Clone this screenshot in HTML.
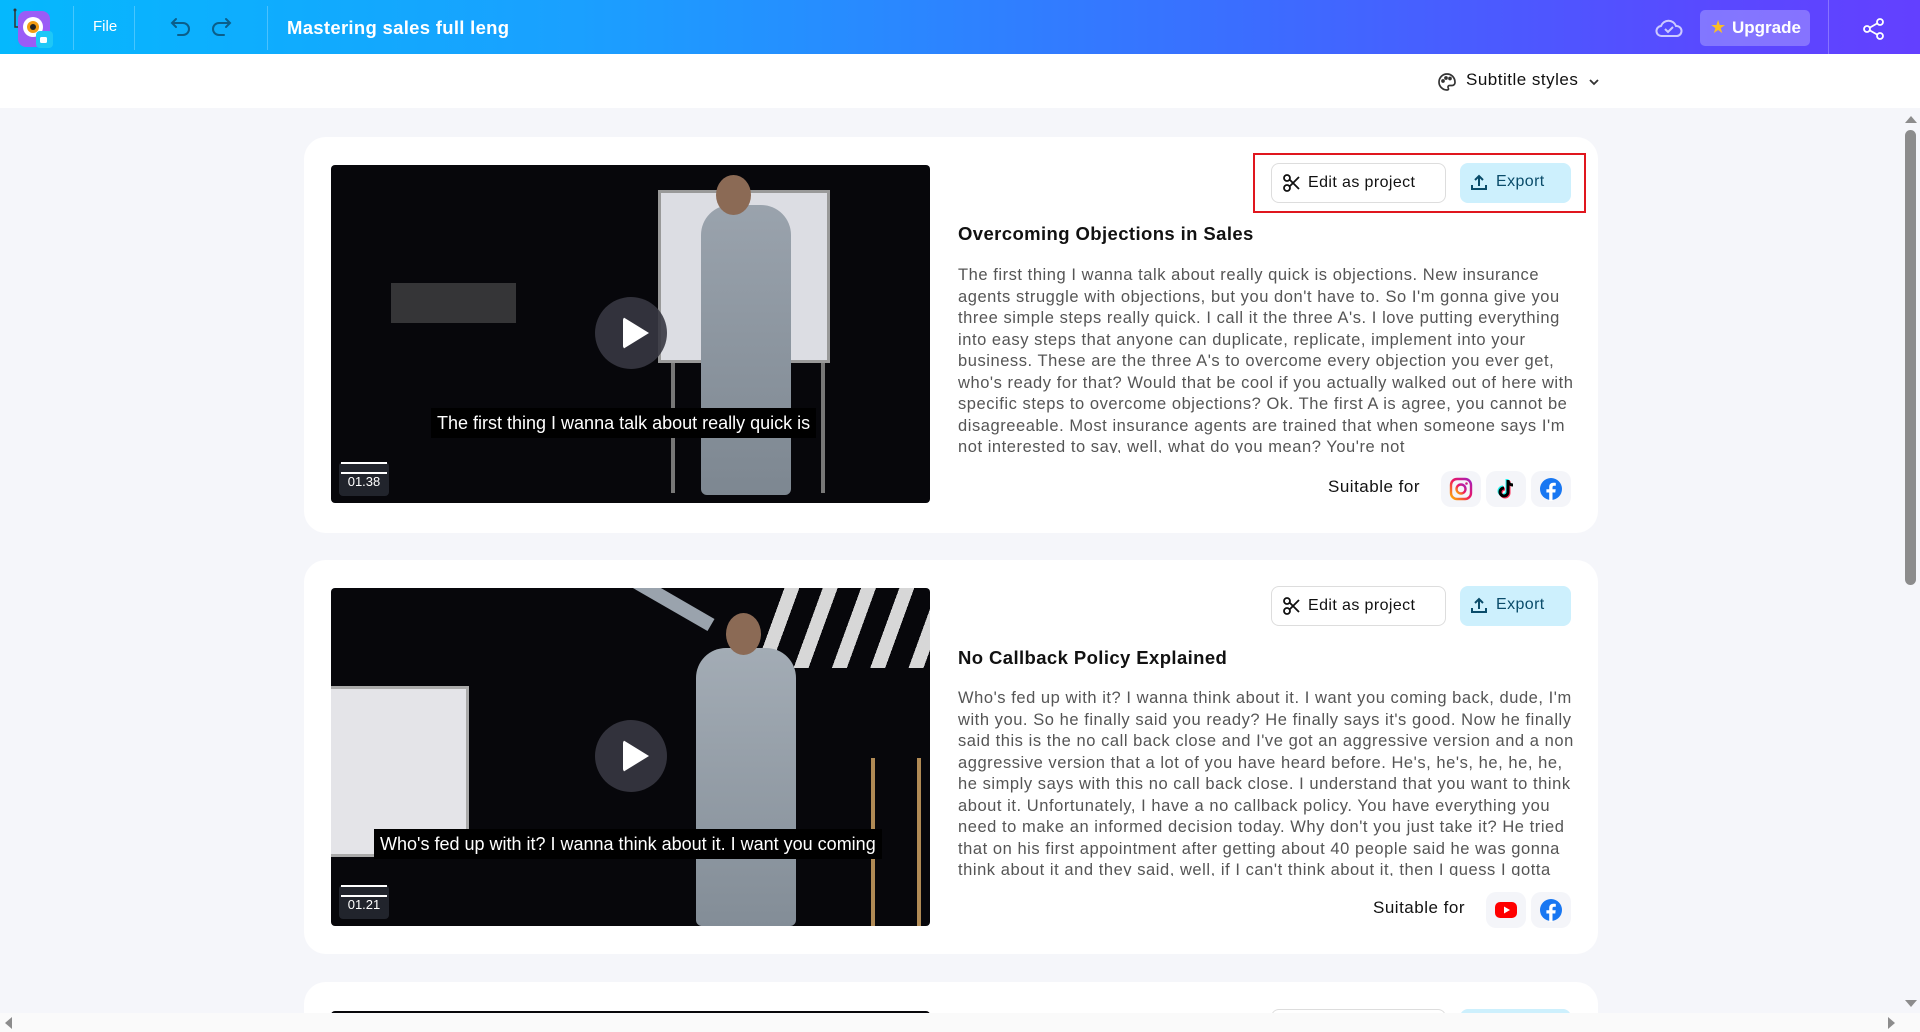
<!DOCTYPE html>
<html><head><meta charset="utf-8"><style>
*{box-sizing:border-box;margin:0;padding:0}
html{width:1920px;height:1032px;overflow:hidden}
body{width:1920px;height:1032px;overflow:hidden;background:#f5f6fa;font-family:"Liberation Sans",sans-serif;position:relative}
.hdr{position:absolute;left:0;top:0;width:1920px;height:54px;background:linear-gradient(90deg,#05b8fd 0%,#1aa0ff 30%,#3b6dff 65%,#5a48ff 90%,#6340ff 100%);color:#fff}
.div{position:absolute;top:6px;width:1px;height:44px;background:rgba(255,255,255,.25)}
.sub{position:absolute;left:0;top:54px;width:1920px;height:54px;background:#fff}
.card{position:absolute;left:304px;width:1294px;background:#fff;border-radius:22px;overflow:hidden}
.vid{position:absolute;left:27px;width:599px;height:338px;border-radius:4px;overflow:hidden;background:#07070b}
.play{position:absolute;left:264px;top:132px;width:72px;height:72px;border-radius:50%;background:rgba(55,55,65,.9)}
.play:after{content:"";position:absolute;left:28px;top:20px;border-left:26px solid #fff;border-top:16px solid transparent;border-bottom:16px solid transparent;border-radius:3px}
.cap{position:absolute;height:30px;background:#000;color:#fff;font-size:18px;line-height:30px;padding:0 6px;white-space:nowrap}
.badge{position:absolute;left:8px;top:297px;width:50px;height:34px;border-radius:4px;background:rgba(40,44,52,.8);color:#fff;font-size:13px;text-align:center;line-height:40px}
.badge:before{content:"";position:absolute;left:2px;top:0;width:46px;height:8px;border-top:2px solid #fff;border-bottom:2px solid #fff}
.btn{position:absolute;height:40px;border-radius:8px;font-size:16px;line-height:38px;color:#111;letter-spacing:.4px}
.edit{left:967px;width:175px;border:1px solid #ddd;background:#fff;padding-left:36px}
.exp{left:1156px;width:111px;background:#cdf0fd;color:#0a4c6a;padding-left:36px}
.ttl{position:absolute;left:654px;font-size:18.5px;font-weight:bold;color:#111;letter-spacing:.4px}
.body{position:absolute;left:654px;width:616px;font-size:16.5px;letter-spacing:.55px;line-height:21.5px;color:#555;overflow:hidden;height:188px}
.suit{position:absolute;font-size:17px;color:#111;letter-spacing:.5px}
.ic{position:absolute;width:40px;height:36px;border-radius:10px;background:#f4f5f9}
.ic svg{position:absolute;left:8px;top:6px}
</style></head><body>
<div class="hdr">
 <svg style="position:absolute;left:12px;top:8px" width="46" height="44" viewBox="0 0 46 44"><path d="M3 2v17h5" stroke="#333" stroke-width="1.5" fill="none"/><circle cx="3" cy="2" r="1.5" fill="#333"/><rect x="6" y="3" width="32" height="36" rx="8" fill="#9b5cf6"/><circle cx="21" cy="19" r="10" fill="#fff"/><circle cx="21" cy="19" r="6" fill="#f39c12"/><circle cx="21" cy="19" r="3" fill="#222"/><rect x="24" y="23" width="17" height="17" rx="4" fill="#1ec8f7"/><rect x="28" y="29" width="7" height="6" rx="1.5" fill="#fff"/></svg>
 <div class="div" style="left:73px"></div>
 <div style="position:absolute;left:93px;top:18px;font-size:15px">File</div>
 <div class="div" style="left:134px"></div>
 <svg style="position:absolute;left:170px;top:17px" width="24" height="22" viewBox="0 0 24 22" fill="none" stroke="#0b5e8a" stroke-width="2" stroke-linecap="round"><path d="M6 2L2 6l4 4M2 6h11a6 6 0 010 12H8"/></svg>
 <svg style="position:absolute;left:208px;top:17px" width="24" height="22" viewBox="0 0 24 22" fill="none" stroke="#0b5e8a" stroke-width="2" stroke-linecap="round"><path d="M18 2l4 4-4 4M22 6H11a6 6 0 000 12h5"/></svg>
 <div class="div" style="left:267px"></div>
 <div style="position:absolute;left:287px;top:17px;font-size:18.5px;font-weight:bold;letter-spacing:.3px">Mastering sales full leng</div>
 <svg style="position:absolute;left:1655px;top:17px" width="28" height="22" viewBox="0 0 28 22" fill="none" stroke="rgba(255,255,255,.7)" stroke-width="2"><path d="M7 19a5 5 0 01-1-10 8 8 0 0115 0 5 5 0 011 10z"/><path d="M10 12l3 3 5-5"/></svg>
 <div style="position:absolute;left:1700px;top:10px;width:110px;height:36px;border-radius:5px;background:rgba(255,255,255,.25);font-size:17px;font-weight:bold;line-height:36px;padding-left:32px">Upgrade</div>
 <div style="position:absolute;left:1710px;top:17px;color:#fbbf24;font-size:18px">★</div>
 <div class="div" style="left:1828px;top:0;height:54px"></div>
 <svg style="position:absolute;left:1862px;top:17px" width="24" height="24" viewBox="0 0 24 24" fill="none" stroke="#fff" stroke-width="1.8"><circle cx="18" cy="5" r="3"/><circle cx="5" cy="12" r="3"/><circle cx="18" cy="19" r="3"/><path d="M8 10.5l7-4M8 13.5l7 4"/></svg>
</div>
<div class="sub">
 <svg style="position:absolute;left:1437px;top:18px" width="20" height="20" viewBox="0 0 20 20" fill="none" stroke="#333" stroke-width="1.7"><path d="M10 2a8 8 0 100 16c1.5 0 1.8-1 1.2-2-.7-1.2 0-2.5 1.5-2.5H15a3 3 0 003-3C18 5.5 14.5 2 10 2z"/><circle cx="6" cy="9" r="1" fill="#333"/><circle cx="9" cy="6" r="1" fill="#333"/><circle cx="13" cy="6.5" r="1" fill="#333"/></svg>
 <div style="position:absolute;left:1466px;top:16px;font-size:17px;color:#111;letter-spacing:.5px">Subtitle styles</div>
 <svg style="position:absolute;left:1588px;top:24px" width="12" height="8" viewBox="0 0 12 8" fill="none" stroke="#333" stroke-width="1.8"><path d="M2 2l4 4 4-4"/></svg>
</div>

<div class="card" style="top:137px;height:396px">
 <div class="vid" style="top:28px">
  <div style="position:absolute;left:327px;top:25px;width:172px;height:173px;background:#dcdde3;border:3px solid #999"></div>
  <div style="position:absolute;left:340px;top:198px;width:4px;height:130px;background:#777"></div>
  <div style="position:absolute;left:490px;top:198px;width:4px;height:130px;background:#777"></div>
  <div style="position:absolute;left:60px;top:118px;width:125px;height:40px;background:#555;opacity:.6"></div>
  <div style="position:absolute;left:370px;top:40px;width:90px;height:290px;background:linear-gradient(#9aa3ad,#7d8791);border-radius:30px 30px 6px 6px"></div>
  <div style="position:absolute;left:385px;top:10px;width:35px;height:40px;background:#8b6a55;border-radius:50%"></div>
  <div class="play"></div>
  <div class="cap" style="left:100px;top:243px">The first thing I wanna talk about really quick is</div>
  <div class="badge">01.38</div>
 </div>
 <div style="position:absolute;left:949px;top:16px;width:333px;height:60px;border:2px solid #e0161e"></div>
 <div class="btn edit" style="top:26px">Edit as project</div>
 <svg style="position:absolute;left:978px;top:36px" width="20" height="20" viewBox="0 0 20 20" fill="none" stroke="#111" stroke-width="1.8"><circle cx="5" cy="15" r="3"/><circle cx="5" cy="5" r="3"/><path d="M7.5 6.5L17 16M7.5 13.5L17 4"/></svg>
 <div class="btn exp" style="top:26px">Export</div>
 <svg style="position:absolute;left:1166px;top:36px" width="18" height="18" viewBox="0 0 18 18" fill="none" stroke="#0a4c6a" stroke-width="2"><path d="M9 13V3M5 7l4-4 4 4M2 12v4h14v-4"/></svg>
 <div class="ttl" style="top:86px">Overcoming Objections in Sales</div>
 <div class="body" style="top:128px">The first thing I wanna talk about really quick is objections. New insurance agents struggle with objections, but you don't have to. So I'm gonna give you three simple steps really quick. I call it the three A's. I love putting everything into easy steps that anyone can duplicate, replicate, implement into your business. These are the three A's to overcome every objection you ever get, who's ready for that? Would that be cool if you actually walked out of here with specific steps to overcome objections? Ok. The first A is agree, you cannot be disagreeable. Most insurance agents are trained that when someone says I'm not interested to say, well, what do you mean? You're not</div>
 <div class="suit" style="left:1024px;top:340px">Suitable for</div>
 <div class="ic" style="left:1137px;top:334px"><svg width="24" height="24" viewBox="0 0 24 24"><defs><linearGradient id="ig" x1="0" y1="1" x2="1" y2="0"><stop offset="0" stop-color="#fdb400"/><stop offset=".5" stop-color="#f0175d"/><stop offset="1" stop-color="#a020c0"/></linearGradient></defs><rect x="2" y="2" width="20" height="20" rx="6" fill="none" stroke="url(#ig)" stroke-width="2.4"/><circle cx="12" cy="12" r="4.5" fill="none" stroke="url(#ig)" stroke-width="2.4"/><circle cx="17.5" cy="6.5" r="1.3" fill="#d02080"/></svg></div>
 <div class="ic" style="left:1182px;top:334px"><svg width="24" height="24" viewBox="0 0 24 24"><path d="M14 3v12a4 4 0 11-4-4" fill="none" stroke="#25f4ee" stroke-width="3" transform="translate(-1,-1)"/><path d="M14 3v12a4 4 0 11-4-4" fill="none" stroke="#fe2c55" stroke-width="3" transform="translate(1,1)"/><path d="M14 3v12a4 4 0 11-4-4M14 3c0 3 2 5 5 5" fill="none" stroke="#000" stroke-width="3"/></svg></div>
 <div class="ic" style="left:1227px;top:334px"><svg width="24" height="24" viewBox="0 0 24 24"><circle cx="12" cy="12" r="11" fill="#1877f2"/><path d="M13.5 24v-8.5h2.8l.4-3.2h-3.2v-2c0-.9.3-1.6 1.600-1.6h1.7V5.9c-.3 0-1.3-.1-2.5-.1-2.5 0-4.1 1.5-4.1 4.2v2.3H7.4v3.2h2.8V24z" fill="#fff"/></svg></div>
</div>

<div class="card" style="top:560px;height:394px">
 <div class="vid" style="top:28px">
  <div style="position:absolute;left:0;top:98px;width:138px;height:171px;background:#e4e4e8;border:3px solid #aaa;border-left:none"></div>
  <div style="position:absolute;left:430px;top:0;width:169px;height:80px;background:repeating-linear-gradient(110deg,transparent 0 22px,#eee 22px 36px);opacity:.9"></div>
  <div style="position:absolute;left:370px;top:170px;width:40px;height:170px;border-left:4px solid #b08a55;border-right:4px solid #b08a55"></div>
  <div style="position:absolute;left:540px;top:170px;width:50px;height:170px;border-left:4px solid #b08a55;border-right:4px solid #b08a55"></div>
  <div style="position:absolute;left:365px;top:60px;width:100px;height:278px;background:linear-gradient(#a3acb5,#838d97);border-radius:30px 30px 6px 6px"></div>
  <div style="position:absolute;left:395px;top:25px;width:35px;height:42px;background:#8b6a55;border-radius:50%"></div>
  <div style="position:absolute;left:290px;top:30px;width:90px;height:14px;background:#9aa3ad;transform:rotate(30deg);transform-origin:right"></div>
  <div class="play"></div>
  <div class="cap" style="left:43px;top:241px">Who's fed up with it? I wanna think about it. I want you coming</div>
  <div class="badge">01.21</div>
 </div>
 <div class="btn edit" style="top:26px">Edit as project</div>
 <svg style="position:absolute;left:978px;top:36px" width="20" height="20" viewBox="0 0 20 20" fill="none" stroke="#111" stroke-width="1.8"><circle cx="5" cy="15" r="3"/><circle cx="5" cy="5" r="3"/><path d="M7.5 6.5L17 16M7.5 13.5L17 4"/></svg>
 <div class="btn exp" style="top:26px">Export</div>
 <svg style="position:absolute;left:1166px;top:36px" width="18" height="18" viewBox="0 0 18 18" fill="none" stroke="#0a4c6a" stroke-width="2"><path d="M9 13V3M5 7l4-4 4 4M2 12v4h14v-4"/></svg>
 <div class="ttl" style="top:87px">No Callback Policy Explained</div>
 <div class="body" style="top:128px">Who's fed up with it? I wanna think about it. I want you coming back, dude, I'm with you. So he finally said you ready? He finally says it's good. Now he finally said this is the no call back close and I've got an aggressive version and a non aggressive version that a lot of you have heard before. He's, he's, he, he, he, he simply says with this no call back close. I understand that you want to think about it. Unfortunately, I have a no callback policy. You have everything you need to make an informed decision today. Why don't you just take it? He tried that on his first appointment after getting about 40 people said he was gonna think about it and they said, well, if I can't think about it, then I guess I gotta do</div>
 <div class="suit" style="left:1069px;top:338px">Suitable for</div>
 <div class="ic" style="left:1182px;top:332px"><svg width="24" height="24" viewBox="0 0 24 24"><rect x="1" y="4" width="22" height="16" rx="5" fill="#f00"/><path d="M10 8.5v7l6-3.5z" fill="#fff"/></svg></div>
 <div class="ic" style="left:1227px;top:332px"><svg width="24" height="24" viewBox="0 0 24 24"><circle cx="12" cy="12" r="11" fill="#1877f2"/><path d="M13.5 24v-8.5h2.8l.4-3.2h-3.2v-2c0-.9.3-1.6 1.6-1.6h1.7V5.9c-.3 0-1.3-.1-2.5-.1-2.5 0-4.1 1.5-4.1 4.2v2.3H7.4v3.2h2.8V24z" fill="#fff"/></svg></div>
</div>

<div class="card" style="top:982px;height:50px;border-radius:22px 22px 0 0">
 <div class="vid" style="top:29px;height:21px;border-radius:4px 4px 0 0"></div>
 <div class="btn edit" style="top:27px;height:23px;border-bottom:none;border-radius:8px 8px 0 0"></div>
 <div class="btn exp" style="top:27px;height:23px;border-radius:8px 8px 0 0"></div>
</div>

<div style="position:absolute;left:1902px;top:108px;width:18px;height:905px;background:#f5f6fa"></div>
<div style="position:absolute;left:1905px;top:116px;border-left:6px solid transparent;border-right:6px solid transparent;border-bottom:7px solid #8c8c8c"></div>
<div style="position:absolute;left:1905px;top:130px;width:11px;height:455px;border-radius:6px;background:#8c8c8c"></div>
<div style="position:absolute;left:1905px;top:1000px;border-left:6px solid transparent;border-right:6px solid transparent;border-top:7px solid #8c8c8c"></div>
<div style="position:absolute;left:0;top:1013px;width:1920px;height:19px;background:#fafafa"></div>
<div style="position:absolute;left:5px;top:1017px;border-top:6px solid transparent;border-bottom:6px solid transparent;border-right:7px solid #8c8c8c"></div>
<div style="position:absolute;left:1888px;top:1017px;border-top:6px solid transparent;border-bottom:6px solid transparent;border-left:7px solid #8c8c8c"></div>
</body></html>
